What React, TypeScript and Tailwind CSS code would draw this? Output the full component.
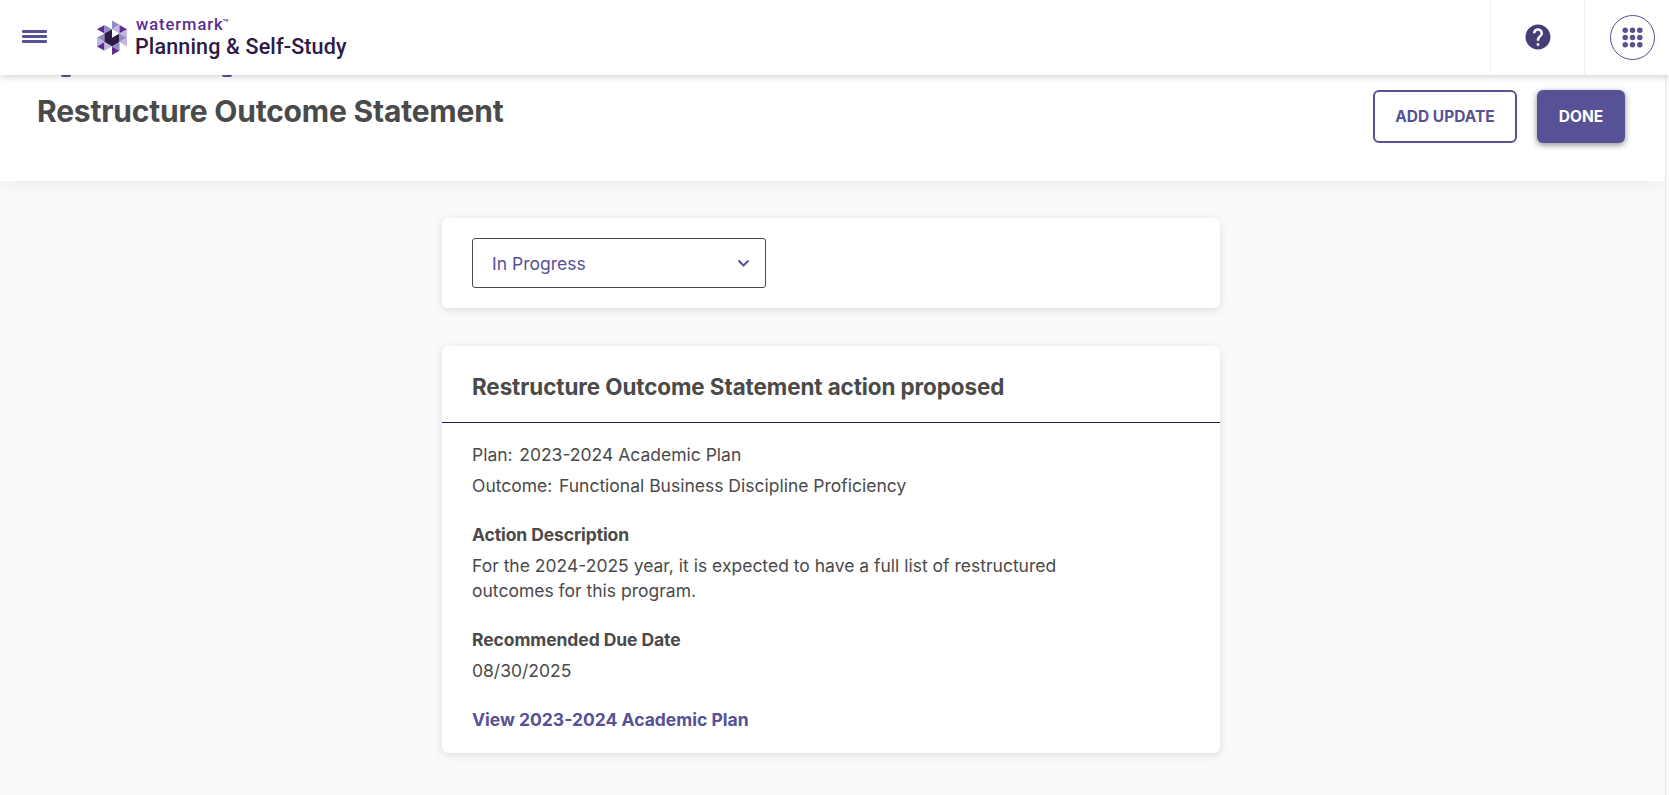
import React from "react";

const LogoMark = () => (
  <svg width="32" height="36" viewBox="0 0 32 36" className="mt-px shrink-0">
    <g transform="translate(1 .5)">
      <path d="M0 8.7 7.5 4.4V13Z" fill="#5c2d91" />
      <path d="M7.5 4.4 15 8.7 7.5 13Z" fill="#8f8cc7" />
      <path d="M15 0 22.5 4.3 15 8.7Z" fill="#8f8cc7" />
      <path d="M22.5 4.4V13L15 8.7Z" fill="#c3b5de" />
      <path d="M22.5 4.4 30 8.7 22.5 13Z" fill="#5c2d91" />
      <path d="M0 17.3 7.5 13V21.6Z" fill="#8f8cc7" />
      <path d="M0 17.3 7.5 21.6 0 26Z" fill="#c3b5de" />
      <path d="M0 26 7.5 21.6V30.3Z" fill="#5c2d91" />
      <path d="M7.5 13V21.6L15 26 22.5 21.6V13L15 17.3V8.7Z" fill="#2d1a47" />
      <path d="M22.5 13 30 8.7V17.3Z" fill="#c3b5de" />
      <path d="M22.5 13 30 17.3 22.5 21.6Z" fill="#8f8cc7" />
      <path d="M30 17.3V26L22.5 21.6Z" fill="#c3b5de" />
      <path d="M7.5 21.6 15 26 7.5 30.3Z" fill="#c3b5de" />
      <path d="M15 26 22.5 30.3 15 34.6Z" fill="#5c2d91" />
      <path d="M15 26 22.5 21.6V30.3Z" fill="#8f8cc7" />
    </g>
  </svg>
);

const dots = [3.2, 10.5, 17.8];

export default function App() {
  return (
    <div className="flex h-[795px] w-[1669px] flex-col overflow-hidden bg-[#fafafa] font-['Inter',sans-serif] text-[#4a4a4a]">
      <header className="relative z-10 flex h-[75px] shrink-0 items-stretch bg-white shadow-[0_1px_8px_rgba(0,0,0,0.2)]">
        <button className="ml-[22px] flex w-[25px] flex-col gap-[2px] pt-[30px]">
          <span className="h-[3px] w-full rounded-[1px] bg-[#575195]" />
          <span className="h-[3px] w-full rounded-[1px] bg-[#575195]" />
          <span className="h-[3px] w-full rounded-[1px] bg-[#575195]" />
        </button>
        <div className="ml-[49px] flex pt-[19px]">
          <LogoMark />
          <div className="ml-[7px] flex flex-col font-['Roboto',sans-serif] whitespace-nowrap">
            <div className="-mt-[3px] ml-px flex h-[18px] items-start text-[16.5px] leading-[18px] font-medium tracking-[0.95px] text-[#5c2d91]">
              watermark<span className="-ml-px text-[10px] leading-[14px] tracking-normal">™</span>
            </div>
            <div className="text-[21.5px] leading-[25px] font-medium tracking-[0.15px] text-[#2d1a47]">Planning &amp; Self-Study</div>
          </div>
        </div>
        <div className="ml-auto flex w-[94px] items-center justify-center border-l border-[#f1f1f1] pb-[2px]">
          <svg width="30" height="30" viewBox="0 0 24 24" fill="#453d75">
            <path d="M12 2C6.48 2 2 6.48 2 12s4.48 10 10 10 10-4.48 10-10S17.52 2 12 2zm1 17h-2v-2h2v2zm2.07-7.75-.9.92C13.45 12.9 13 13.5 13 15h-2v-.5c0-1.1.45-2.1 1.17-2.83l1.24-1.26c.37-.36.59-.86.59-1.41 0-1.1-.9-2-2-2s-2 .9-2 2H8c0-2.21 1.79-4 4-4s4 1.79 4 4c0 .88-.36 1.68-.93 2.25z" />
          </svg>
        </div>
        <div className="flex w-[85px] items-center border-l border-[#f1f1f1] pl-[25px]">
          <span className="flex size-[45px] items-center justify-center rounded-full border border-[#575195]">
            <svg width="21" height="21" viewBox="0 0 21 21" fill="#575195">
              {dots.map((y) => dots.map((x) => <circle key={`${x}-${y}`} cx={x} cy={y} r="2.75" />))}
            </svg>
          </span>
        </div>
      </header>

      <div className="flex grow">
        <main className="flex w-[1665px] flex-col">
          <section className="flex h-[106px] shrink-0 bg-white pr-[40px] pl-[37px] shadow-[0_0_24px_rgba(0,0,0,0.08)]">
            <div className="flex flex-col">
              <div className="flex h-[2px] gap-[151px] pl-[24px]">
                <span className="h-[2px] w-[10px] rounded-b-full bg-[#575195]" />
                <span className="h-[2px] w-[10px] rounded-b-full bg-[#575195]" />
              </div>
              <h1 className="mt-[14px] text-[30px] leading-[40px] font-bold tracking-[-0.2px] whitespace-nowrap">
                Restructure Outcome Statement
              </h1>
            </div>
            <div className="ml-auto flex gap-[20px] pt-[15px]">
              <button className="h-[53px] w-[144px] rounded-[6px] border-2 border-[#575195] pt-px text-[15.5px] font-bold text-[#575195]">
                ADD UPDATE
              </button>
              <button className="h-[53px] w-[88px] rounded-[6px] bg-[#575195] pt-px text-[15.5px] font-bold text-white shadow-[0_2px_6px_rgba(0,0,0,0.45)]">
                DONE
              </button>
            </div>
          </section>

          <div className="ml-[442px] flex w-[778px] flex-col gap-[38px] pt-[37px]">
            <section className="h-[90px] rounded-[6px] bg-white px-[30px] pt-[20px] shadow-[0_2px_8px_rgba(0,0,0,0.12)]">
              <button className="flex h-[50px] w-[294px] items-center justify-between rounded-[3px] border border-[#4a4a4a] pr-[15px] pl-[19px] text-[17.5px] text-[#575195]">
                <span className="pt-[2px]">In Progress</span>
                <svg width="13" height="9" viewBox="0 0 13 9" fill="none" stroke="#575195" strokeWidth="2">
                  <path d="M1.5 1.5 6.5 6.5 11.5 1.5" />
                </svg>
              </button>
            </section>

            <section className="h-[407px] rounded-[6px] bg-white shadow-[0_2px_8px_rgba(0,0,0,0.12)]">
              <h2 className="flex h-[77px] items-center border-b border-[#2d1a56] px-[30px] pt-[5px] text-[22.4px] font-bold tracking-[-0.07px] whitespace-nowrap">
                Restructure Outcome Statement action proposed
              </h2>
              <div className="flex flex-col px-[30px] pt-[19px] text-[17.5px] leading-[25px]">
                <p className="flex gap-[6.6px]"><span>Plan:</span><span>2023-2024 Academic Plan</span></p>
                <p className="mt-[6px] flex gap-[6.6px]"><span>Outcome:</span><span>Functional Business Discipline Proficiency</span></p>
                <h3 className="mt-[24px] font-bold tracking-[-0.1px]">Action Description</h3>
                <p className="mt-[6px]">For the 2024-2025 year, it is expected to have a full list of restructured<br />outcomes for this program.</p>
                <h3 className="mt-[24px] font-bold tracking-[-0.08px]">Recommended Due Date</h3>
                <p className="mt-[6px]">08/30/2025</p>
                <a className="mt-[24px] font-bold text-[#575195]">View 2023-2024 Academic Plan</a>
              </div>
            </section>
          </div>
        </main>
        <div className="w-[4px] border-l border-[#e8e8e8] bg-[#fafafa]" />
      </div>
    </div>
  );
}
